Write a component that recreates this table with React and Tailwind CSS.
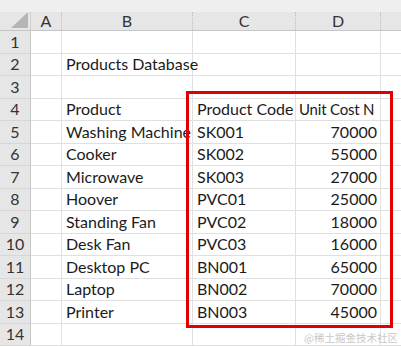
import React from "react";

const rows = [
  ["", "", ""],
  ["Products Database", "", ""],
  ["", "", ""],
  ["Product", "Product Code", "Unit Cost N"],
  ["Washing Machine", "SK001", "70000"],
  ["Cooker", "SK002", "55000"],
  ["Microwave", "SK003", "27000"],
  ["Hoover", "PVC01", "25000"],
  ["Standing Fan", "PVC02", "18000"],
  ["Desk Fan", "PVC03", "16000"],
  ["Desktop PC", "BN001", "65000"],
  ["Laptop", "BN002", "70000"],
  ["Printer", "BN003", "45000"],
  ["", "", ""],
];

const font = { fontFamily: "Lato, 'Noto Sans', sans-serif" };

export default function App() {
  return (
    <div className="relative w-[401px] h-[347px] overflow-hidden bg-white text-[#1b1b1b]" style={font}>
      <div className="h-[12px] bg-[#efefef]" />
      <div className="flex h-[19px] bg-[#e6e6e6] border-b border-[#c6c6c6] text-[16px] text-[#333]">
        <div className="w-[31px] shrink-0 flex items-end justify-end pr-[2px] pb-[2px] border-r border-[#d0d0d0]">
          <svg width="17" height="16" viewBox="0 0 17 16"><polygon points="17,0 17,16 0,16" fill="#b5b5b5" /></svg>
        </div>
        <div className="w-[31px] shrink-0 flex items-center justify-center border-r border-dotted border-[#bdbdbd] leading-none">A</div>
        <div className="w-[131px] shrink-0 flex items-center justify-center border-r border-dotted border-[#bdbdbd] leading-none">B</div>
        <div className="w-[103px] shrink-0 flex items-center justify-center border-r border-dotted border-[#bdbdbd] leading-none">C</div>
        <div className="w-[85px] shrink-0 flex items-center justify-center border-r border-dotted border-[#bdbdbd] leading-none">D</div>
        <div className="flex-1" />
      </div>
      {rows.map((r, i) => {
        const isNum = /^\d+$/.test(r[2]);
        return (
          <div key={i} className="flex h-[22.5px] text-[16px] leading-none">
            <div className="w-[31px] shrink-0 bg-[#e6e6e6] border-r border-[#c6c6c6] border-b border-b-[#d6d6d6] flex items-center justify-center text-[#333]">{i + 1}</div>
            <div className="w-[31px] shrink-0 border-r border-b border-[#e0e0e0]" />
            <div className="w-[131px] shrink-0 border-r border-b border-[#e0e0e0] flex items-center pl-[4px] whitespace-nowrap overflow-visible relative z-10">{r[0]}</div>
            <div className="w-[103px] shrink-0 border-r border-b border-[#e0e0e0] flex items-center pl-[4px] whitespace-nowrap bg-white">{r[1]}</div>
            {isNum ? (
              <div className="w-[85px] shrink-0 border-r border-b border-[#e0e0e0] flex items-center justify-end pr-[3px] whitespace-nowrap">{r[2]}</div>
            ) : (
              <div className="w-[85px] shrink-0 border-r border-b border-[#e0e0e0] flex items-center pl-[3px] whitespace-nowrap text-[15px] tracking-[-0.2px]">{r[2]}</div>
            )}
            <div className="flex-1 border-b border-[#e0e0e0]" />
          </div>
        );
      })}
      <div className="absolute left-[186px] top-[91px] w-[207px] h-[237px] border-[3px] border-[#e00000] z-20" />
      <div className="absolute right-[3px] bottom-[4px] text-[10.5px] text-[#c8c8c8] leading-none z-30" style={{ fontFamily: "'Noto Sans CJK SC', sans-serif" }}>@稀土掘金技术社区</div>
    </div>
  );
}
